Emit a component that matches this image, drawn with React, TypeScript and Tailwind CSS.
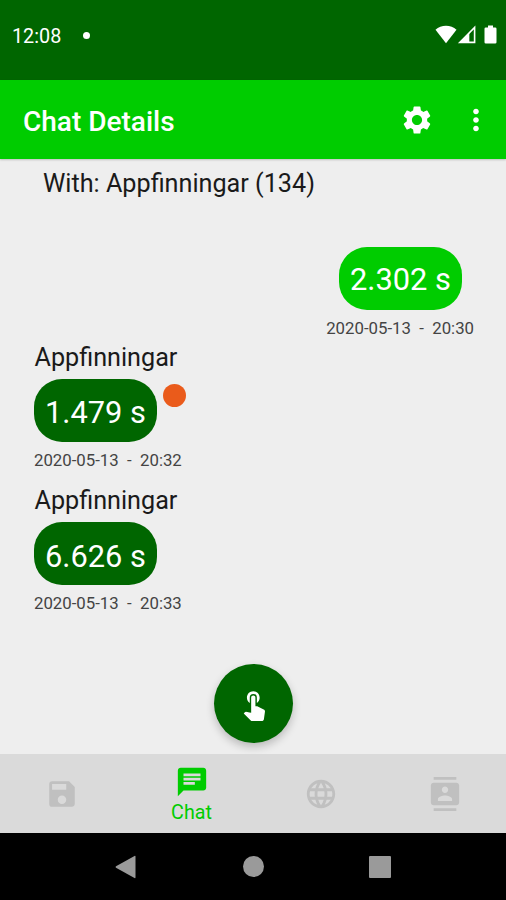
import {
  MdChat,
  MdContacts,
  MdLanguage,
  MdMoreVert,
  MdSave,
  MdSettings,
  MdTouchApp,
} from "react-icons/md";

function StatusBar() {
  return (
    <div className="flex h-20 items-start justify-between bg-[#006600] pt-6 pl-3 pr-[9px]">
      <div className="flex h-6 items-center text-white">
        <span className="w-[49px] whitespace-nowrap pt-0.5 text-[19.8px] leading-6">12:08</span>
        <span className="ml-[22px] mb-[2px] h-[7px] w-[7px] rounded-full bg-white" />
      </div>
      <div className="mt-px flex items-start text-white">
        <svg width="22" height="19" viewBox="0 0 22 19" fill="currentColor">
          <path d="M0.5 4.7C6 -0.7 16 -0.7 21.5 4.7L11 18.2z" />
        </svg>
        <svg width="20" height="19" viewBox="0 0 20 19" fill="none" stroke="currentColor">
          <path d="M17.6 2.5V17.4H2.8z" strokeWidth="1.6" />
          <path d="M2 18L12.3 7.8V18z" fill="currentColor" stroke="none" />
        </svg>
        <svg className="ml-[7px]" width="13" height="19" viewBox="0 0 13 19" fill="currentColor">
          <path d="M4 0.5h5v2h2.2q1.3 0 1.3 1.3v13.4q0 1.3-1.3 1.3H1.8q-1.3 0-1.3-1.3V3.8q0-1.3 1.3-1.3H4z" />
        </svg>
      </div>
    </div>
  );
}

function AppBar() {
  return (
    <header className="z-10 flex h-[79px] items-center bg-[#00cc00] pl-[23px] pr-[13px] pt-px text-white shadow-[0_1px_2px_rgba(0,0,0,0.2)]">
      <h1 className="flex-1 whitespace-nowrap pt-1 text-[28px] font-medium leading-8">Chat Details</h1>
      <MdSettings size={34} />
      <MdMoreVert size={34} className="ml-[25px]" />
    </header>
  );
}

function Bubble({ text, sent = false }: { text: string; sent?: boolean }) {
  return (
    <div
      className={`flex h-[63px] w-[123px] items-center justify-center whitespace-nowrap rounded-[28px] text-[30.8px] text-white ${
        sent ? "bg-[#00cc00] pt-1" : "bg-[#006600] pt-1.5"
      }`}
    >
      {text}
    </div>
  );
}

function Stamp({ time }: { time: string }) {
  return (
    <div className="mt-2 whitespace-pre text-[16.8px] leading-5 text-[#444]">
      {`2020-05-13  -  ${time}`}
    </div>
  );
}

function Received({ text, time, unread = false }: { text: string; time: string; unread?: boolean }) {
  return (
    <div className="h-[143.4px]">
      <div className="pl-[0.5px] text-[25.2px] leading-8 text-[#1a1a1a]">Appfinningar</div>
      <div className="mt-[5px] flex items-start">
        <Bubble text={text} />
        {unread && <span className="ml-[6px] mt-[5px] h-[23px] w-[23px] rounded-full bg-[#ea5b1b]" />}
      </div>
      <Stamp time={time} />
    </div>
  );
}

function Conversation() {
  return (
    <main className="flex h-[595px] flex-col bg-[#eeeeee]">
      <div className="pl-[43px] pt-[9px] text-[25.2px] leading-8 text-[#1a1a1a]">
        With: Appfinningar (134)
      </div>
      <div className="mt-[47px] flex h-[95px] flex-col items-end pr-8">
        <div className="mr-3">
          <Bubble text="2.302 s" sent />
        </div>
        <Stamp time="20:30" />
      </div>
      <div className="pl-[34px]">
        <Received text="1.479 s" time="20:32" unread />
        <Received text="6.626 s" time="20:33" />
      </div>
      <button className="mt-auto mb-[11px] ml-[214px] flex h-[79px] w-[79px] shrink-0 items-center justify-center rounded-full bg-[#006600] text-white shadow-[0_4px_8px_rgba(0,0,0,0.22)]">
        <MdTouchApp size={34} />
      </button>
    </main>
  );
}

function TabBar() {
  return (
    <nav className="flex h-[79px] items-center bg-[#dadada] text-[#c0c0c0]">
      <div className="flex w-[124px] justify-center">
        <MdSave size={34} />
      </div>
      <div className="flex w-[135px] flex-col items-center pt-[3px] text-[#00cc00]">
        <MdChat size={34} />
        <span className="mt-0.5 text-[19.7px] leading-6">Chat</span>
      </div>
      <div className="flex w-[124px] justify-center">
        <MdLanguage size={34} />
      </div>
      <div className="flex w-[123px] justify-center">
        <MdContacts size={34} />
      </div>
    </nav>
  );
}

function SystemBar() {
  return (
    <div className="flex h-[67px] items-center bg-black pl-[115px] text-[#9a9a9a]">
      <svg width="21" height="24" viewBox="0 0 21 24" fill="currentColor">
        <path d="M19.5 1Q20.5.5 20.5 1.7V22.3Q20.5 23.5 19.5 23L1 12.7Q0 12 1 11.3z" />
      </svg>
      <span className="ml-[107px] h-[21px] w-[21px] rounded-full bg-[#9a9a9a]" />
      <span className="ml-[105px] h-[22px] w-[22px] rounded-[1px] bg-[#9a9a9a]" />
    </div>
  );
}

export default function App() {
  return (
    <div className="flex h-[900px] w-[506px] flex-col overflow-hidden bg-black font-[Roboto,'Liberation_Sans',sans-serif]">
      <StatusBar />
      <AppBar />
      <Conversation />
      <TabBar />
      <SystemBar />
    </div>
  );
}
